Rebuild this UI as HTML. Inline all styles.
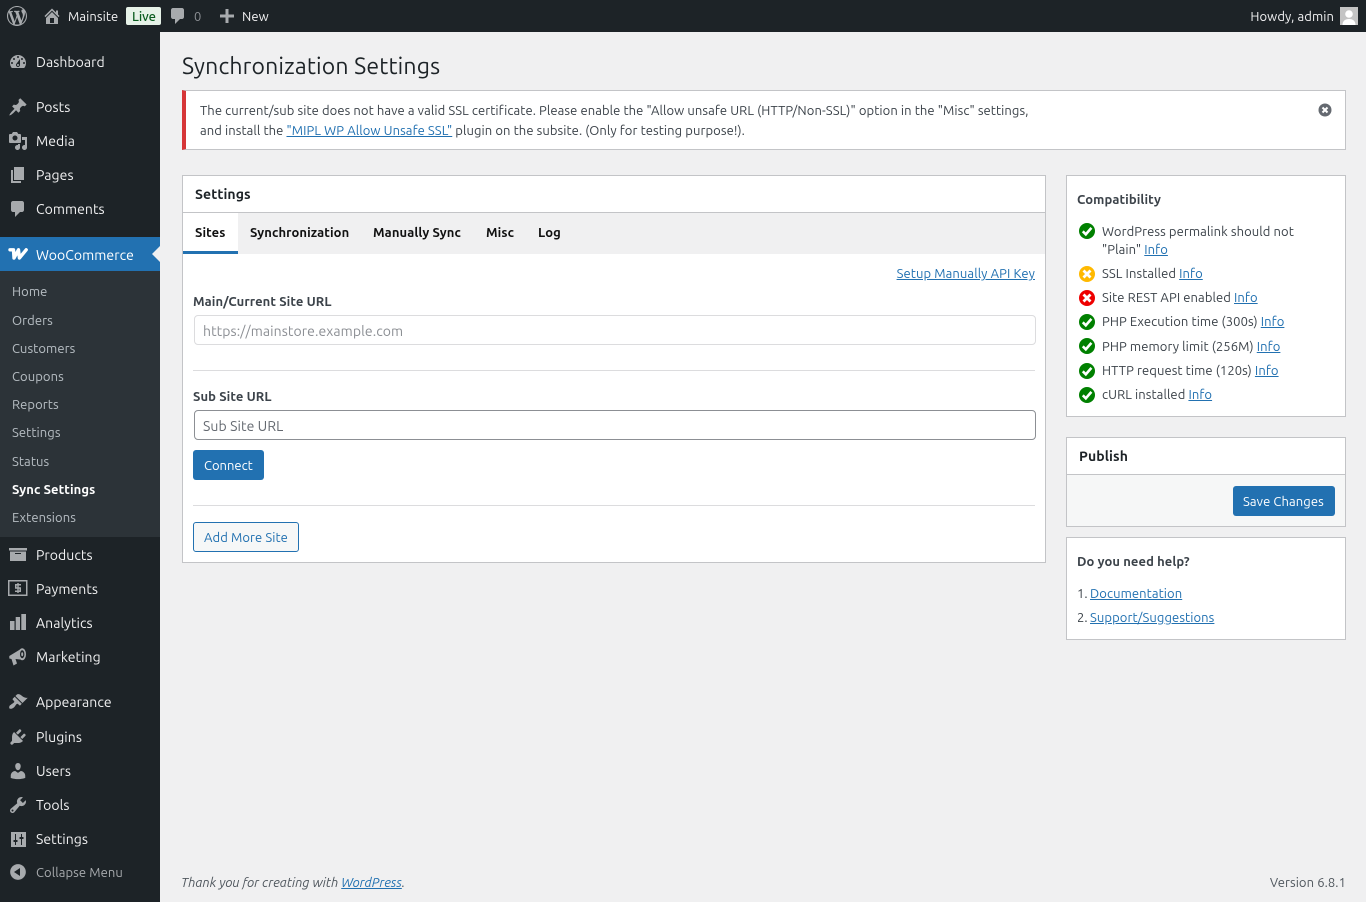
<!DOCTYPE html>
<html lang="en"><head><meta charset="utf-8"><title>Synchronization Settings</title>
<style>
html,body{margin:0;padding:0;background:#f0f0f1}
body{position:relative;width:1366px;height:902px;overflow:hidden;font-family:Ubuntu,"Liberation Sans",sans-serif;font-size:13px;color:#3c434a}
.t{position:absolute;line-height:20px;white-space:nowrap;margin-top:1px;letter-spacing:.0064em}
.b{position:absolute;box-sizing:border-box}
a{color:#2271b1;text-decoration:underline}
svg{position:absolute;display:block}
.t.m{left:36px;font-size:14px;color:#f0f0f1;margin-top:0;letter-spacing:.004em}
.s{left:12px;color:rgba(240,246,252,.7)}
.i{left:8px;width:20px;height:20px;fill:#a7aaad}
.t.h{font-weight:700;color:#1d2327;margin-top:0}
.tb{top:222px;font-weight:700;color:#111}
.c{left:1102px;color:#3c434a}
.g{left:1078px;width:18px;height:18px}
.top{color:#f0f0f1}
.card{background:#fff;border:1px solid #c3c4c7}
</style></head><body>
<div class="b" style="left:0;top:0;width:160px;height:902px;background:#1d2327"></div>
<div class="b" style="left:0;top:0;width:1366px;height:32px;background:#1d2327"></div>
<svg style="left:7px;top:6px;width:20px;height:20px;fill:#a7aaad" viewBox="0 0 20 20"><path d="M20 10c0-5.510-4.490-10-10-10C4.480 0 0 4.490 0 10c0 5.520 4.480 10 10 10 5.510 0 10-4.480 10-10zM7.780 15.370L4.370 6.220c.550-.020 1.170-.080 1.170-.080.500-.060.440-1.130-.060-1.110 0 0-1.450.110-2.370.110-.180 0-.370 0-.580-.010C4.120 2.690 6.890 1.050 10 1.050c2.330 0 4.450.870 6.040 2.340-.680-.110-1.650.390-1.650 1.580 0 .740.450 1.360.900 2.100.350.610.550 1.360.550 2.460 0 1.490-1.400 5-1.400 5l-3.030-8.370c.540-.020.820-.170.820-.170.500-.050.440-1.250-.060-1.220 0 0-1.440.120-2.380.120-.870 0-2.330-.120-2.330-.120-.500-.030-.560 1.200-.060 1.220l.920.080 1.260 3.410zM17.410 10c.240-.640.740-1.870.430-4.250.700 1.290 1.050 2.710 1.050 4.250 0 3.290-1.730 6.240-4.400 7.780.970-2.590 1.940-5.200 2.920-7.780zM6.100 18.090C3.120 16.650 1.110 13.530 1.110 10c0-1.300.230-2.480.720-3.590C3.250 10.300 4.670 14.200 6.100 18.090zm4.030-6.980l2.580 6.980c-.860.290-1.740.430-2.710.430-.790 0-1.570-.110-2.290-.330.810-2.370 1.630-4.720 2.420-7.080z"/></svg>
<svg style="left:42px;top:6px;width:20px;height:20px;fill:#a7aaad" viewBox="0 0 20 20"><path d="M16 8.500l1.530 1.530-1.060 1.060L10 4.620l-6.470 6.470-1.060-1.060L10 2.500l4 4v-2h2v4zm-6-2.460l6 5.990V18H4v-5.970zM12 17v-5H8v5h4z"/></svg>
<div class="t top" style="left:68px;top:6px">Mainsite</div>
<div class="b" style="left:126px;top:7px;width:35px;height:18px;background:#e6f2e8;border-radius:2px"></div>
<div class="t" style="left:132px;top:6px;color:#0a5c1f;font-weight:500;letter-spacing:0">Live</div>
<svg style="left:168px;top:6px;width:20px;height:20px;fill:#a7aaad" viewBox="0 0 20 20"><path d="M5 2h9c1.100 0 2 .9 2 2v7c0 1.100-.9 2-2 2h-2l-5 5v-5H5c-1.100 0-2-.9-2-2V4c0-1.100.9-2 2-2z"/></svg>
<div class="t" style="left:194px;top:6px;color:#8c8f94">0</div>
<svg style="left:217px;top:6px;width:20px;height:20px;fill:#a7aaad" viewBox="0 0 20 20"><path d="M17 8.500v3h-5.500V17h-3v-5.500H3v-3h5.500V3h3v5.500z"/></svg>
<div class="t top" style="left:242px;top:6px">New</div>
<div class="t top" style="right:32px;top:6px">Howdy, admin</div>
<svg style="left:1340px;top:7px;width:18px;height:18px" viewBox="0 0 18 18"><rect width="18" height="18" fill="#c4c4c4"/><circle cx="9" cy="7" r="3.800" fill="#fff"/><path d="M2.500 18c0-4 2.500-6 6.500-6s6.500 2 6.500 6z" fill="#fff"/></svg>

<svg class="i" style="top:52px" viewBox="0 0 20 20"><path d="M3.760 16h12.480c1.100-1.370 1.760-3.110 1.760-5 0-4.420-3.580-8-8-8s-8 3.580-8 8c0 1.890.66 3.630 1.760 5zM10 4c.55 0 1 .45 1 1s-.45 1-1 1-1-.45-1-1 .45-1 1-1zM6 6c.55 0 1 .45 1 1s-.45 1-1 1-1-.45-1-1 .45-1 1-1zm8 0c.55 0 1 .45 1 1s-.45 1-1 1-1-.45-1-1 .45-1 1-1zm-5.370 5.550L12 7v6c0 1.100-.9 2-2 2s-2-.9-2-2c0-.57.24-1.080.63-1.450zM4 10c.55 0 1 .45 1 1s-.45 1-1 1-1-.45-1-1 .45-1 1-1zm12 0c.55 0 1 .45 1 1s-.45 1-1 1-1-.45-1-1 .45-1 1-1zm-5 3c0-.55-.45-1-1-1s-1 .45-1 1 .45 1 1 1 1-.45 1-1z" fill-rule="evenodd"/></svg>
<div class="t m" style="top:52px">Dashboard</div>
<svg class="i" style="top:97px" viewBox="0 0 20 20"><path d="M10.440 3.020l1.820-1.820 6.360 6.350-1.830 1.820c-1.050-.68-2.480-.57-3.410.36l-.75.75c-.92.93-1.040 2.350-.35 3.410l-1.830 1.820-2.410-2.410-2.800 2.790c-.42.42-3.380 2.710-3.800 2.290s1.860-3.390 2.280-3.810l2.790-2.790L4.100 9.360l1.830-1.820c1.050.69 2.480.57 3.400-.36l.75-.75c.93-.92 1.050-2.350.36-3.410z"/></svg>
<div class="t m" style="top:97px">Posts</div>
<svg class="i" style="top:131px" viewBox="0 0 20 20"><path d="M13 11V4c0-.55-.45-1-1-1h-1.670L9 1H5L3.670 3H2c-.55 0-1 .45-1 1v7c0 .55.45 1 1 1h10c.55 0 1-.45 1-1zM7 4.500c1.380 0 2.500 1.120 2.500 2.500S8.380 9.500 7 9.500 4.500 8.380 4.500 7 5.620 4.500 7 4.500zM14 6h5v10.500c0 1.380-1.120 2.500-2.500 2.500S14 17.880 14 16.500s1.120-2.500 2.500-2.500c.17 0 .34.020.5.050V9h-3V6zm-4 8.050V13h2v3.500c0 1.380-1.120 2.500-2.500 2.500S7 17.880 7 16.500 8.120 14 9.500 14c.17 0 .34.020.5.050z" fill-rule="evenodd"/></svg>
<div class="t m" style="top:131px">Media</div>
<svg class="i" style="top:165px" viewBox="0 0 20 20"><path d="M6 15V2h10v13H6zm-1 1h8v2H3V5h2v11z"/></svg>
<div class="t m" style="top:165px">Pages</div>
<svg class="i" style="top:199px" viewBox="0 0 20 20"><path d="M5 2h9c1.100 0 2 .9 2 2v7c0 1.100-.9 2-2 2h-2l-5 5v-5H5c-1.100 0-2-.9-2-2V4c0-1.100.9-2 2-2z"/></svg>
<div class="t m" style="top:199px">Comments</div>

<div class="b" style="left:0;top:237px;width:160px;height:34px;background:#2271b1"></div>
<div class="b" style="left:0;top:271px;width:160px;height:266px;background:#2c3338"></div>
<svg style="left:152px;top:246px;width:8px;height:16px" viewBox="0 0 8 16"><path d="M8 0L0 8l8 8z" fill="#f0f0f1"/></svg>
<svg style="left:8px;top:248px;width:20px;height:12px" viewBox="0 0 20 12"><path d="M2 1.800h3.500L6 10l4.500-8.200.9 8.200 6.800-8.200" fill="none" stroke="#fff" stroke-width="3.400" stroke-linejoin="round" stroke-linecap="round"/></svg>
<div class="t m" style="top:245px;color:#fff">WooCommerce</div>
<div class="t s" style="top:281px">Home</div>
<div class="t s" style="top:310px">Orders</div>
<div class="t s" style="top:338px">Customers</div>
<div class="t s" style="top:366px">Coupons</div>
<div class="t s" style="top:394px">Reports</div>
<div class="t s" style="top:422px">Settings</div>
<div class="t s" style="top:451px">Status</div>
<div class="t s" style="top:479px;color:#fff;font-weight:700">Sync Settings</div>
<div class="t s" style="top:507px">Extensions</div>

<svg class="i" style="top:545px" viewBox="0 0 20 20"><path d="M1 3h18v2.500H1zM2 6.500h16V16H2zm5 1.500v1h6V8z" fill-rule="evenodd"/></svg>
<div class="t m" style="top:545px">Products</div>
<svg class="i" style="top:579px" viewBox="0 0 20 20"><path d="M0 1h19.500v16H0zm1.500 1.500v13h16.500v-13z" fill-rule="evenodd"/><path d="M7 5h6v1.500H8.500v1.700H13V13H7v-1.500h4.500V9.700H7z"/><path d="M9.300 4h1.400v10H9.300z"/></svg>
<div class="t m" style="top:579px">Payments</div>
<svg class="i" style="top:613px" viewBox="0 0 20 20"><path d="M2 8h4.500v9H2zM7.700 4H12v13H7.700zM13.300 1H18v16h-4.700z"/></svg>
<div class="t m" style="top:613px">Analytics</div>
<svg class="i" style="top:647px" viewBox="0 0 20 20"><path d="M1.300 9L12 2.500v10l-4.500-.5L9 16.500l-3.500 2-2-6.500-2.200-.5z"/><ellipse cx="14.200" cy="7.200" rx="3.800" ry="6"/><ellipse cx="14.200" cy="7.200" rx="2.200" ry="4" fill="#1d2327"/><ellipse cx="14.200" cy="7.200" rx="1" ry="2"/></svg>
<div class="t m" style="top:647px">Marketing</div>
<svg class="i" style="top:692px" viewBox="0 0 20 20"><path d="M14.480 11.060L7.410 3.990l1.500-1.500c.5-.56 2.300-.47 3.510.32 1.210.8 1.430 1.280 2.910 2.100 1.180.64 2.450 1.260 4.450.85zm-.71.71L6.700 4.700 4.930 6.470c-.39.39-.39 1.020 0 1.410l1.060 1.060c.39.39.39 1.030 0 1.420-.6.6-1.430 1.110-2.210 1.690-.35.26-.7.53-1.010.84C1.430 13.230.78 15.250 1.500 16.500c1.250.72 3.270.07 4.610-1.270.31-.31.58-.66.84-1.010.58-.78 1.090-1.610 1.690-2.210.39-.39 1.030-.39 1.420 0l1.060 1.060c.39.39 1.020.39 1.410 0z"/></svg>
<div class="t m" style="top:692px">Appearance</div>
<svg class="i" style="top:727px" viewBox="0 0 20 20"><path d="M13.110 4.360L9.870 7.600 8 5.730l3.240-3.240c.35-.34 1.050-.2 1.560.32.52.51.66 1.210.31 1.550zm-8 1.770l.91-1.120 9.010 9.010-1.190.84c-.71.71-2.630 1.160-3.820 1.160H6.140L4.900 17.260c-.59.59-1.540.59-2.120 0-.59-.58-.59-1.530 0-2.120l1.240-1.240v-3.880c0-1.130.4-3.190 1.090-3.890zm7.260 3.970l3.240-3.240c.34-.35 1.040-.21 1.550.31.52.51.66 1.210.31 1.550l-3.240 3.250z"/></svg>
<div class="t m" style="top:727px">Plugins</div>
<svg class="i" style="top:761px" viewBox="0 0 20 20"><path d="M10 9.250c-2.270 0-2.730-3.440-2.730-3.440C7 4.020 7.820 2 9.970 2c2.160 0 2.980 2.020 2.710 3.810 0 0-.41 3.440-2.680 3.440zm0 2.570L12.720 10c2.390 0 4.520 2.330 4.520 4.530v2.490s-3.650 1.130-7.240 1.130c-3.650 0-7.240-1.130-7.240-1.130v-2.490c0-2.250 1.940-4.480 4.470-4.480z"/></svg>
<div class="t m" style="top:761px">Users</div>
<svg class="i" style="top:795px" viewBox="0 0 20 20"><path d="M16.680 9.770c-1.340 1.340-3.300 1.670-4.950.99l-5.410 6.520c-.99.99-2.590.99-3.580 0s-.99-2.590 0-3.570l6.520-5.420c-.68-1.650-.35-3.610.99-4.950 1.280-1.280 3.120-1.620 4.720-1.060l-2.890 2.890 2.820 2.820 2.860-2.870c.53 1.580.18 3.390-1.080 4.650zM3.810 16.210c.4.39 1.040.39 1.430 0 .4-.4.4-1.040 0-1.430-.39-.4-1.030-.4-1.430 0-.39.39-.39 1.030 0 1.430z" fill-rule="evenodd"/></svg>
<div class="t m" style="top:795px">Tools</div>
<svg class="i" style="top:829px" viewBox="0 0 20 20"><path d="M3 3h15v15H3zM7 5v6H5.500v2H7v3h1v-3h1.500v-2H8V5zm6 0v3h-1.500v2H13v6h1v-6h1.500V8H14V5z" fill-rule="evenodd"/></svg>
<div class="t m" style="top:829px">Settings</div>
<svg class="i" style="top:862px" viewBox="0 0 20 20"><path d="M10 2.160c4.330 0 7.840 3.510 7.840 7.840s-3.510 7.840-7.840 7.840S2.160 14.330 2.160 10 5.670 2.160 10 2.160zM12 14V6l-6 4z" fill-rule="evenodd"/></svg>
<div class="t" style="left:36px;top:862px;color:#a7aaad">Collapse Menu</div>

<div class="t" style="left:182px;top:51px;font-size:23px;line-height:30px;color:#1d2327;letter-spacing:.0072em">Synchronization Settings</div>

<div class="b card" style="left:182px;top:90px;width:1164px;height:60px;border-left:4px solid #d63638"></div>
<div class="t" style="left:200px;top:100px">The current/sub site does not have a valid SSL certificate. Please enable the "Allow unsafe URL (HTTP/Non-SSL)" option in the "Misc" settings,</div>
<div class="t" style="left:200px;top:120px">and install the <a>"MIPL WP Allow Unsafe SSL"</a> plugin on the subsite. (Only for testing purpose!).</div>
<svg style="left:1318px;top:103px;width:14px;height:14px" viewBox="0 0 14 14"><circle cx="7" cy="7" r="6.500" fill="#646970"/><path d="M4.500 4.500l5 5M9.500 4.500l-5 5" stroke="#fff" stroke-width="2"/></svg>

<div class="b card" style="left:182px;top:175px;width:864px;height:388px"></div>
<div class="t h" style="left:195px;top:184px;font-size:14px">Settings</div>
<div class="b" style="left:183px;top:212px;width:862px;height:1px;background:#c3c4c7"></div>
<div class="b" style="left:183px;top:213px;width:862px;height:41px;background:#f0f0f1"></div>
<div class="b" style="left:183px;top:213px;width:55px;height:41px;background:#fff;border-bottom:3px solid #2271b1"></div>
<div class="t tb" style="left:195px">Sites</div>
<div class="t tb" style="left:250px;letter-spacing:.0072em">Synchronization</div>
<div class="t tb" style="left:373px;letter-spacing:.0072em">Manually Sync</div>
<div class="t tb" style="left:486px">Misc</div>
<div class="t tb" style="left:538px">Log</div>
<div class="t" style="right:331px;top:263px;letter-spacing:.0072em"><a>Setup Manually API Key</a></div>
<div class="t" style="left:193px;top:291px;font-weight:700">Main/Current Site URL</div>
<div class="b" style="left:194px;top:315px;width:842px;height:30px;border:1px solid #dcdcde;border-radius:4px;background:#fff"></div>
<div class="t" style="left:203px;top:321px;font-size:14px;margin-top:0;color:#8c8f94">https://mainstore.example.com</div>
<div class="b" style="left:193px;top:370px;width:842px;height:1px;background:#dcdcde"></div>
<div class="t" style="left:193px;top:386px;font-weight:700">Sub Site URL</div>
<div class="b" style="left:194px;top:410px;width:842px;height:30px;border:1px solid #8c8f94;border-radius:4px;background:#fff"></div>
<div class="t" style="left:203px;top:416px;font-size:14px;margin-top:0;color:#646970">Sub Site URL</div>
<div class="b" style="left:193px;top:450px;width:71px;height:30px;background:#2271b1;border-radius:3px"></div>
<div class="t" style="left:204px;top:455px;color:#fff;letter-spacing:0">Connect</div>
<div class="b" style="left:193px;top:505px;width:842px;height:1px;background:#dcdcde"></div>
<div class="b" style="left:193px;top:522px;width:106px;height:30px;background:#f6f7f7;border:1px solid #2271b1;border-radius:3px"></div>
<div class="t" style="left:204px;top:527px;color:#2271b1">Add More Site</div>

<div class="b card" style="left:1066px;top:175px;width:280px;height:242px"></div>
<div class="t" style="left:1077px;top:189px;font-weight:700">Compatibility</div>
<svg class="g" style="top:222px" viewBox="0 0 18 18"><circle cx="9" cy="9" r="8" fill="#008000"/><path d="M4.800 9.300l3 3 5.600-6.400" fill="none" stroke="#fff" stroke-width="2.600"/></svg>
<div class="t c" style="top:221px">WordPress permalink should not</div>
<div class="t c" style="top:239px">"Plain" <a>Info</a></div>
<svg class="g" style="top:265px" viewBox="0 0 18 18"><circle cx="9" cy="9" r="8" fill="#ffb900"/><path d="M5.500 5.500l7 7M12.500 5.500l-7 7" stroke="#fff" stroke-width="2.800"/></svg>
<div class="t c" style="top:263px">SSL Installed <a>Info</a></div>
<svg class="g" style="top:289px" viewBox="0 0 18 18"><circle cx="9" cy="9" r="8" fill="#ee0000"/><path d="M5.500 5.500l7 7M12.500 5.500l-7 7" stroke="#fff" stroke-width="2.800"/></svg>
<div class="t c" style="top:287px">Site REST API enabled <a>Info</a></div>
<svg class="g" style="top:313px" viewBox="0 0 18 18"><circle cx="9" cy="9" r="8" fill="#008000"/><path d="M4.800 9.300l3 3 5.600-6.400" fill="none" stroke="#fff" stroke-width="2.600"/></svg>
<div class="t c" style="top:311px">PHP Execution time (300s) <a>Info</a></div>
<svg class="g" style="top:337px" viewBox="0 0 18 18"><circle cx="9" cy="9" r="8" fill="#008000"/><path d="M4.800 9.300l3 3 5.600-6.400" fill="none" stroke="#fff" stroke-width="2.600"/></svg>
<div class="t c" style="top:336px">PHP memory limit (256M) <a>Info</a></div>
<svg class="g" style="top:362px" viewBox="0 0 18 18"><circle cx="9" cy="9" r="8" fill="#008000"/><path d="M4.800 9.300l3 3 5.600-6.400" fill="none" stroke="#fff" stroke-width="2.600"/></svg>
<div class="t c" style="top:360px">HTTP request time (120s) <a>Info</a></div>
<svg class="g" style="top:386px" viewBox="0 0 18 18"><circle cx="9" cy="9" r="8" fill="#008000"/><path d="M4.800 9.300l3 3 5.600-6.400" fill="none" stroke="#fff" stroke-width="2.600"/></svg>
<div class="t c" style="top:384px">cURL installed <a>Info</a></div>

<div class="b card" style="left:1066px;top:437px;width:280px;height:90px"></div>
<div class="t h" style="left:1079px;top:446px;font-size:14px">Publish</div>
<div class="b" style="left:1067px;top:474px;width:278px;height:52px;background:#f6f7f7;border-top:1px solid #c3c4c7"></div>
<div class="b" style="left:1233px;top:486px;width:102px;height:30px;background:#2271b1;border-radius:3px"></div>
<div class="t" style="left:1243px;top:491px;color:#fff;letter-spacing:.0072em">Save Changes</div>

<div class="b card" style="left:1066px;top:537px;width:280px;height:103px"></div>
<div class="t" style="left:1077px;top:551px;font-weight:700">Do you need help?</div>
<div class="t" style="left:1077px;top:583px">1.</div><div class="t" style="left:1090px;top:583px"><a>Documentation</a></div>
<div class="t" style="left:1077px;top:607px">2.</div><div class="t" style="left:1090px;top:607px"><a>Support/Suggestions</a></div>

<div class="t" style="left:181px;top:872px;font-style:italic;color:#50575e;letter-spacing:0">Thank you for creating with <a>WordPress</a>.</div>
<div class="t" style="right:20px;top:872px;color:#50575e">Version 6.8.1</div>
</body></html>
